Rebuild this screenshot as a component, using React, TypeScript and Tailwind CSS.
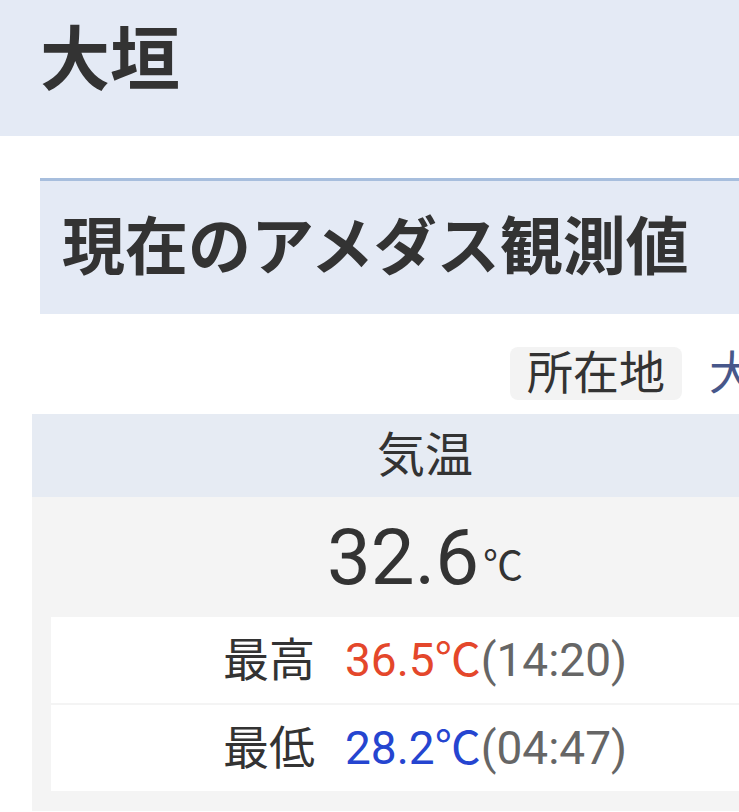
const jp = { fontFamily: 'Roboto, "Noto Sans CJK JP", sans-serif' };

const extremes = [
  { label: "最高", value: "36.5℃", time: "(14:20)", color: "text-[#e4472b]" },
  { label: "最低", value: "28.2℃", time: "(04:47)", color: "text-[#2545d0]" },
];

export default function App() {
  return (
    <div className="w-[739px] h-[812px] overflow-hidden bg-white text-[#333]" style={jp}>
      <div className="w-[860px]">
        {/* Station name */}
        <div className="h-[136px] bg-[#e4eaf5] pl-[40px] pt-[26px]">
          <h1 className="text-[70px] font-bold leading-none">大垣</h1>
        </div>

        {/* Section title */}
        <div className="mt-[42px] ml-[40px] h-[136px] border-t-[3px] border-[#a7bedd] bg-[#e4eaf5] flex items-center pl-[22px]">
          <h2 className="text-[63px] font-bold leading-none tracking-[0px]">現在のアメダス観測値</h2>
        </div>

        {/* Location */}
        <div className="mt-[33px] ml-[510px] flex items-center gap-[27px]">
          <span className="h-[53px] px-[17px] rounded-[8px] bg-[#f3f3f3] text-[46px] leading-[53px]">所在地</span>
          <span className="text-[46px] leading-[53px] text-[#47578a] whitespace-nowrap">大垣市</span>
        </div>

        {/* Temperature table */}
        <div className="mt-[14px] ml-[32px] w-[786px]">
          <div className="h-[83px] bg-[#e6ebf3] flex items-center justify-center">
            <span className="text-[48px] leading-none">気温</span>
          </div>
          <div className="bg-[#f4f4f4] px-[19px] pb-[20px]">
            <div className="h-[120px] flex items-center justify-center pt-[2px]">
              <span className="text-[78px] leading-none">32.6</span>
              <span className="text-[40px] leading-none ml-[4px] mt-[18px]">℃</span>
            </div>
            <div className="flex flex-col gap-[2px]">
              {extremes.map((e) => (
                <div key={e.label} className="h-[86px] bg-white flex items-center justify-center text-[46px] leading-none">
                  <span className="mr-[30px]">{e.label}</span>
                  <span className={e.color}>{e.value}</span>
                  <span className="text-[#666]">{e.time}</span>
                </div>
              ))}
            </div>
          </div>
        </div>
      </div>
    </div>
  );
}
